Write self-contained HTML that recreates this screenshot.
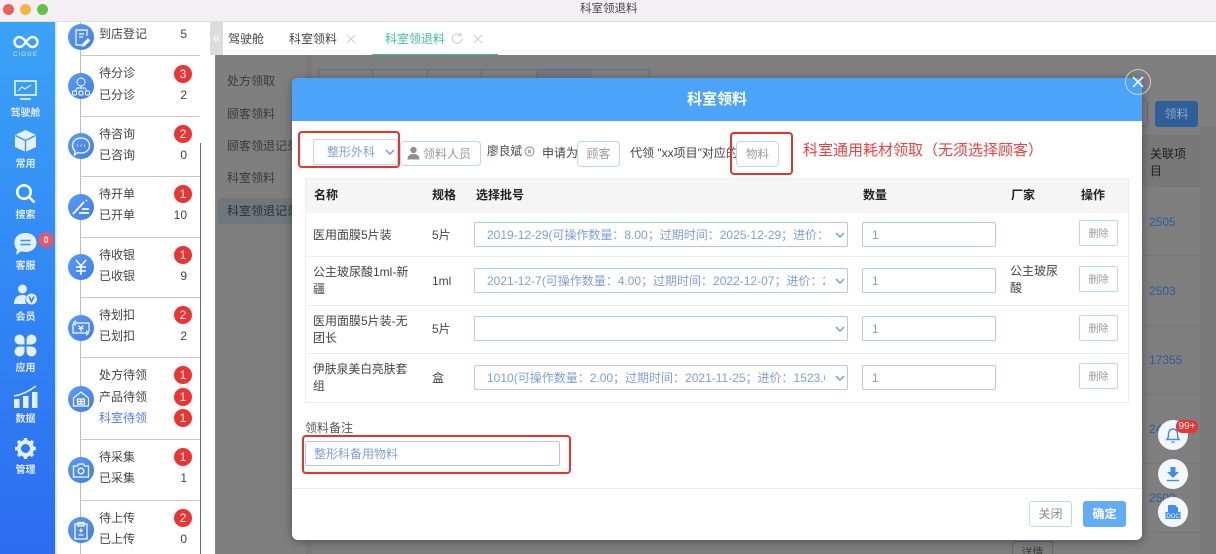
<!DOCTYPE html>
<html lang="zh"><head><meta charset="utf-8"><title>科室领退料</title>
<style>
*{box-sizing:border-box}
html,body{margin:0;padding:0;width:1216px;height:554px;overflow:hidden;background:#fff}
#root{position:relative;width:1216px;height:554px;overflow:hidden;background:#fff;font-family:"Liberation Sans","Noto Sans CJK SC",sans-serif;color:#444}
.a{position:absolute}
.t{position:absolute;white-space:nowrap;line-height:16px;font-size:12px}
.n{position:absolute;left:0;width:51px;text-align:center;color:#dfeafc;font-size:10px;line-height:12px;font-weight:bold}
.l{position:absolute;left:99px;font-size:12px;line-height:16px;color:#444;white-space:nowrap}
.c{position:absolute;width:20px;left:167px;text-align:right;font-size:12px;line-height:16px;color:#444}
.b{position:absolute;left:174px;width:18px;height:18px;border-radius:50%;background:#ee3333;color:#fff;text-align:center;font-size:12px;line-height:18px}
.d{position:absolute;left:80px;width:120px;height:1px;background:#c9c9c9}
.ic{position:absolute;left:68px;width:26px;height:26px;border-radius:50%;background:linear-gradient(135deg,#5b9bf6,#3f7de9)}
.in{position:absolute;border:1px solid #b4c9ec;border-radius:2px;background:#fff;color:#7f9fd9;font-size:12px;line-height:25px;padding-left:12px;white-space:nowrap;overflow:hidden}
.del{position:absolute;left:1079px;width:39px;height:26px;border:1px solid #bcd6f6;border-radius:2px;color:#999;font-size:10px;line-height:25px;padding-top:1px;text-align:center;background:#fff}
.chev{position:absolute;width:10px;height:6px}
.red{position:absolute;border:2px solid #e8322e;border-radius:4px}
.rl{position:absolute;left:305px;width:824px;height:1px;background:#ededf0}
.th{font-weight:bold;color:#222}
.num{position:absolute;left:1149px;color:#2e5c9a;font-size:12px;line-height:16px}
.fab{position:absolute;left:1158px;width:30px;height:30px;border-radius:50%;background:#f3f6fb}
.clip{display:block;width:338px;overflow:hidden}
</style></head><body><div id="root">

<!-- title bar -->
<div class="a" style="left:0;top:0;width:1216px;height:22px;background:#f4eff5;border-bottom:1px solid #e2dee4"></div>
<div class="a" style="left:3px;top:4px;width:11px;height:11px;border-radius:50%;background:#ef5f58"></div>
<div class="a" style="left:20px;top:4px;width:11px;height:11px;border-radius:50%;background:#f6b440"></div>
<div class="a" style="left:37px;top:4px;width:11px;height:11px;border-radius:50%;background:#60c443"></div>
<div class="t" style="left:580px;top:1px;color:#444;font-size:11.5px">科室领退料</div>

<!-- nav -->
<div class="a" style="left:0;top:22px;width:55px;height:532px;background:linear-gradient(180deg,#3ba3f7 0%,#3187f5 50%,#2c6cf0 100%)"></div>
<div class="a" style="left:55px;top:22px;width:3px;height:532px;background:linear-gradient(90deg,#cfe4fb,#fff)"></div>
<svg class="a" style="left:13px;top:35px" width="26" height="14" viewBox="0 0 26 14"><path d="M13 7C10 2.500 8 2 6.500 2a5 5 0 0 0 0 10c1.500 0 3.500-.5 6.500-5s5-5 6.500-5a5 5 0 0 1 0 10c-1.500 0-3.500-.5-6.500-5" fill="none" stroke="#fff" stroke-width="2.400"/></svg>
<div class="a" style="left:0;top:51px;width:51px;text-align:center;color:#d8e9fc;font-size:6px;line-height:8px;letter-spacing:1.200px">CIGUE</div>

<svg class="a" style="left:13px;top:79px" width="26" height="24" viewBox="0 0 26 24"><rect x="2" y="2" width="21" height="14" fill="none" stroke="#dcecfd" stroke-width="1.800"/><path d="M5 12l4-4 3 2 6-4" fill="none" stroke="#dcecfd" stroke-width="1.200"/><path d="M7 20h11" stroke="#dcecfd" stroke-width="1.800"/></svg>
<div class="n" style="top:108px">驾驶舱</div>
<svg class="a" style="left:13px;top:129px" width="25" height="24" viewBox="0 0 25 24"><path d="M12.500 1L23 6v12l-10.500 5L2 18V6z" fill="#e3f0fd"/><path d="M2.500 6.500l10 5 10-5M12.500 11.500V23" fill="none" stroke="#3a93f5" stroke-width="1.300"/></svg>
<div class="n" style="top:159px">常用</div>
<svg class="a" style="left:15px;top:183px" width="21" height="21" viewBox="0 0 21 21"><circle cx="9" cy="9" r="6.700" fill="none" stroke="#fff" stroke-width="2.600"/><path d="M14 14l5.500 5.500" stroke="#fff" stroke-width="2.600"/></svg>
<div class="n" style="top:210px">搜索</div>
<svg class="a" style="left:13px;top:232px" width="25" height="24" viewBox="0 0 25 24"><path d="M12.500 1c6.500 0 11 4 11 9.500S19 20 12.500 20c-1.500 0-3-.2-4.300-.7L3 23l1-5.500C2.200 15.800 1.500 13.300 1.500 10.500 1.500 5 6 1 12.500 1z" fill="#e3f0fd"/><path d="M7.500 8.500h10M7.500 12.500h10" stroke="#3a8ef5" stroke-width="1.500"/></svg>
<div class="n" style="top:261px">客服</div>
<div class="a" style="left:39px;top:233px;width:14px;height:14px;border-radius:50%;background:#ee5560;box-shadow:0 0 3px #ee5560;color:#fff;font-size:9px;line-height:14px;text-align:center;font-weight:bold">0</div>
<svg class="a" style="left:13px;top:283px" width="25" height="24" viewBox="0 0 25 24"><circle cx="9.500" cy="6" r="4.500" fill="#e3f0fd"/><path d="M1 21c0-6 3-9 8.500-9 2 0 3 .4 4 1-1.500 2-1.500 6 0 8z" fill="#e3f0fd"/><circle cx="18.500" cy="16" r="5.500" fill="#e3f0fd"/><path d="M16 13.500l2.500 5 2.500-5" fill="none" stroke="#2f7bf2" stroke-width="1.500"/></svg>
<div class="n" style="top:312px">会员</div>
<svg class="a" style="left:14px;top:334px" width="23" height="23" viewBox="0 0 23 23" fill="#e3f0fd"><path d="M5.500 0.500a5 5 0 0 1 5 5v5h-5a5 5 0 0 1 0-10zM17.500 0.500a5 5 0 0 1 0 10h-5v-5a5 5 0 0 1 5-5zM5.500 12.500h5v5a5 5 0 1 1-5-5zM12.500 12.500h5a5 5 0 1 1-5 5z"/></svg>
<div class="n" style="top:363px">应用</div>
<svg class="a" style="left:13px;top:385px" width="25" height="24" viewBox="0 0 25 24"><rect x="1" y="14" width="5.500" height="9" fill="#e3f0fd"/><rect x="10" y="11" width="5.500" height="12" fill="#e3f0fd"/><rect x="19" y="7" width="5.500" height="16" fill="#e3f0fd"/><path d="M1 11C8 10 15 7 23 1" fill="none" stroke="#e3f0fd" stroke-width="1.600"/></svg>
<div class="n" style="top:414px">数据</div>
<svg class="a" style="left:14px;top:437px" width="23" height="23" viewBox="0 0 23 23"><circle cx="11.500" cy="11.500" r="6.500" fill="none" stroke="#e3f0fd" stroke-width="4"/><path d="M11.500 1v4M11.500 18v4M1 11.500h4M18 11.500h4M4 4l3 3M16 16l3 3M19 4l-3 3M7 16l-3 3" stroke="#e3f0fd" stroke-width="3.400"/></svg>
<div class="n" style="top:465px">管理</div>

<!-- task panel -->
<div class="a" style="left:80px;top:22px;width:1px;height:532px;background:#bdbdbd"></div>
<div class="a" style="left:200px;top:143px;width:1px;height:411px;background:#6a6a6a"></div>
<div class="d" style="top:55px"></div><div class="d" style="top:116px"></div><div class="d" style="top:176px"></div><div class="d" style="top:237px"></div><div class="d" style="top:297px"></div><div class="d" style="top:357px"></div><div class="d" style="top:439px"></div><div class="d" style="top:500px"></div>

<div class="ic" style="top:24px"><svg width="26" height="26" viewBox="0 0 26 26" fill="none" stroke="#fff" stroke-width="1.200"><path d="M19 12V6H8v15h6M11 10h5M11 13h4"/><path d="M15 20l5-5 1.500 1.500-5 5-2 .5z" fill="#fff"/></svg></div>
<div class="ic" style="top:73px"><svg width="26" height="26" viewBox="0 0 26 26" fill="none" stroke="#fff" stroke-width="1"><circle cx="13" cy="9" r="4"/><path d="M13 13v3M7 18l2-3h8l2 3"/><rect x="4.500" y="18" width="4" height="4" rx="1"/><rect x="11" y="18" width="4" height="4" rx="1"/><rect x="17.500" y="18" width="4" height="4" rx="1"/></svg></div>
<div class="ic" style="top:133px"><svg width="26" height="26" viewBox="0 0 26 26" fill="none" stroke="#fff" stroke-width="1.300"><path d="M13 5c5 0 8.500 3 8.500 7.500S18 20 13 20c-1 0-2-.1-3-.5L6.500 22l.5-4c-1.500-1.500-2.500-3.300-2.500-5.500C4.500 8 8 5 13 5z"/><path d="M9 12.500h1M12.500 12.500h1M16 12.500h1" stroke-width="1.800"/></svg></div>
<div class="ic" style="top:194px"><svg width="26" height="26" viewBox="0 0 26 26" fill="none" stroke="#fff" stroke-width="1.800"><path d="M5 20L16 8M18 7l1-1M14 15h7M11 19h10"/></svg></div>
<div class="ic" style="top:254px"><svg width="26" height="26" viewBox="0 0 26 26" fill="none" stroke="#fff" stroke-width="1.500"><path d="M8 6l5 6 5-6M8 13h10M8 17h10M13 12v9"/></svg></div>
<div class="ic" style="top:315px"><svg width="26" height="26" viewBox="0 0 26 26" fill="none" stroke="#fff" stroke-width="1.200"><path d="M7 8h14v9M19 18H5V9M8 5.500L5.500 8 8 10.500M18 15.500L20.500 18 18 20.500"/><path d="M10.500 10.500L13 13l2.500-2.500M10.500 13.500h5M13 13v3.500"/></svg></div>
<div class="ic" style="top:386px"><svg width="26" height="26" viewBox="0 0 26 26" fill="none" stroke="#fff" stroke-width="1.200"><path d="M5.500 12L13 6l7.500 6v8h-15z"/><path d="M9.500 13h7v5h-7zM9.500 15.500h7M13 13v5"/></svg></div>
<div class="ic" style="top:457px"><svg width="26" height="26" viewBox="0 0 26 26" fill="none" stroke="#fff" stroke-width="1.300"><path d="M5.500 9h4l1-2h5l1 2h4v11h-15z"/><circle cx="13" cy="14" r="2.800"/></svg></div>
<div class="ic" style="top:517px"><svg width="26" height="26" viewBox="0 0 26 26" fill="none" stroke="#fff" stroke-width="1.300"><path d="M7 7h12v15H7zM10 5.500h6V9h-6zM13 11.500v4M11 13.500h4M10.500 18h5"/></svg></div>

<div class="l" style="top:26px">到店登记</div><div class="c" style="top:26px">5</div>
<div class="l" style="top:65px">待分诊</div><div class="b" style="top:65px">3</div>
<div class="l" style="top:87px">已分诊</div><div class="c" style="top:87px">2</div>
<div class="l" style="top:126px">待咨询</div><div class="b" style="top:125px">2</div>
<div class="l" style="top:147px">已咨询</div><div class="c" style="top:147px">0</div>
<div class="l" style="top:186px">待开单</div><div class="b" style="top:185px">1</div>
<div class="l" style="top:207px">已开单</div><div class="c" style="top:207px">10</div>
<div class="l" style="top:247px">待收银</div><div class="b" style="top:246px">1</div>
<div class="l" style="top:268px">已收银</div><div class="c" style="top:268px">9</div>
<div class="l" style="top:307px">待划扣</div><div class="b" style="top:306px">2</div>
<div class="l" style="top:328px">已划扣</div><div class="c" style="top:328px">2</div>
<div class="l" style="top:367px">处方待领</div><div class="b" style="top:366px">1</div>
<div class="l" style="top:389px">产品待领</div><div class="b" style="top:388px">1</div>
<div class="l" style="top:410px;color:#4f7ff0">科室待领</div><div class="b" style="top:409px">1</div>
<div class="l" style="top:449px">待采集</div><div class="b" style="top:448px">1</div>
<div class="l" style="top:470px">已采集</div><div class="c" style="top:470px">1</div>
<div class="l" style="top:510px">待上传</div><div class="b" style="top:509px">2</div>
<div class="l" style="top:531px">已上传</div><div class="c" style="top:531px">0</div>

<!-- tabs -->
<div class="a" style="left:210px;top:22px;width:13px;height:33px;background:#dcdcdc;color:#fff;font-size:14px;line-height:30px;text-align:center">«</div>
<div class="t" style="left:228px;top:31px;font-size:12px;color:#444">驾驶舱</div>
<div class="t" style="left:289px;top:31px;font-size:12px;color:#444">科室领料</div>
<svg class="a" style="left:346px;top:34px" width="10" height="10" viewBox="0 0 10 10"><path d="M1 1l8 8M9 1L1 9" stroke="#ccc" stroke-width="1"/></svg>
<div class="t" style="left:385px;top:31px;font-size:12px;color:#3fc0a6">科室领退料</div>
<svg class="a" style="left:451px;top:32px" width="13" height="13" viewBox="0 0 13 13"><path d="M11 6.500A4.800 4.800 0 1 1 9.500 3" fill="none" stroke="#ccc" stroke-width="1.100"/><path d="M10 .8v3H7" fill="none" stroke="#ccc" stroke-width="1"/></svg>
<svg class="a" style="left:473px;top:34px" width="10" height="10" viewBox="0 0 10 10"><path d="M1 1l8 8M9 1L1 9" stroke="#ccc" stroke-width="1"/></svg>
<div class="a" style="left:372px;top:54px;width:126px;height:1px;background:#3fc0a6"></div>

<!-- dim background -->
<div class="a" style="left:215px;top:55px;width:1001px;height:499px;background:#7f7f7f"></div>
<div class="a" style="left:215px;top:55px;width:1px;height:499px;background:#8a8a8a"></div>
<div class="a" style="left:306px;top:55px;width:6px;height:499px;background:#7a7a7a"></div>
<div class="a" style="left:218px;top:198px;width:80px;height:26px;background:#6f777c;border-radius:3px"></div>
<div class="t" style="left:227px;top:73px;color:#3a3a3a">处方领取</div>
<div class="t" style="left:227px;top:106px;color:#3a3a3a">顾客领料</div>
<div class="t" style="left:227px;top:138px;color:#3a3a3a">顾客领退记录</div>
<div class="t" style="left:227px;top:170px;color:#3a3a3a">科室领料</div>
<div class="t" style="left:227px;top:203px;color:#2f2f2f">科室领退记录</div>
<div class="a" style="left:318px;top:69px;width:332px;height:20px;border:1px solid #5f6f88"></div>
<div class="a" style="left:372px;top:69px;width:1px;height:20px;background:#5f6f88"></div>
<div class="a" style="left:427px;top:69px;width:1px;height:20px;background:#5f6f88"></div>
<div class="a" style="left:481px;top:69px;width:1px;height:20px;background:#5f6f88"></div>
<div class="a" style="left:536px;top:69px;width:55px;height:20px;background:#75787f;border:1px solid #5f6f88"></div>
<div class="a" style="left:1142px;top:100px;width:6px;height:27px;border:1px solid #6a6a6a;border-left:0;border-radius:0 3px 3px 0"></div>
<div class="a" style="left:1155px;top:101px;width:43px;height:26px;background:#2f5f98;border-radius:3px;color:#8fa8c6;font-size:12px;line-height:26px;text-align:center">领料</div>
<div class="a" style="left:1142px;top:135px;width:58px;height:52px;background:#787878"></div>
<div class="t" style="left:1150px;top:146px;width:40px;white-space:normal;line-height:17px;color:#1f1f1f">关联项目</div>
<div class="a" style="left:1142px;top:255px;width:58px;height:1px;background:#777"></div>
<div class="a" style="left:1142px;top:325px;width:58px;height:1px;background:#777"></div>
<div class="a" style="left:1142px;top:394px;width:58px;height:1px;background:#777"></div>
<div class="a" style="left:1142px;top:463px;width:58px;height:1px;background:#777"></div>
<div class="a" style="left:1142px;top:532px;width:58px;height:1px;background:#777"></div>
<div class="a" style="left:1200px;top:127px;width:16px;height:427px;background:#797979"></div>
<div class="num" style="top:214px">2505</div>
<div class="num" style="top:283px">2503</div>
<div class="num" style="top:352px">17355</div>
<div class="num" style="top:421px">2402</div>
<div class="num" style="top:490px">2502</div>
<div class="a" style="left:1012px;top:541px;width:41px;height:13px;border:1px solid #5d6b80;border-bottom:0;border-radius:2px 2px 0 0;color:#3a3a3a;font-size:11px;text-align:center;line-height:22px;overflow:hidden">详情</div>

<!-- modal -->
<div class="a" style="left:292px;top:78px;width:850px;height:462px;background:#fff;border-radius:6px;box-shadow:0 2px 10px rgba(0,0,0,.35)"></div>
<div class="a" style="left:292px;top:78px;width:850px;height:43px;background:#4ba4f9;border-radius:6px 6px 0 0;color:#fff;font-weight:bold;font-size:15px;line-height:43px;text-align:center">科室领料</div>
<div class="a" style="left:1125px;top:69px;width:26px;height:26px;border:1px solid #ddd;border-radius:50%;opacity:.85"></div>
<svg class="a" style="left:1131px;top:75px" width="14" height="14" viewBox="0 0 14 14"><path d="M2 2l10 10M12 2L2 12" stroke="#e8eff9" stroke-width="1.800"/></svg>

<!-- modal toolbar -->
<div class="in" style="left:313px;top:139px;width:85px;height:26px;padding-left:13px;font-size:12px;border-color:#c5d6f2;line-height:25px">整形外科</div>
<svg class="chev" style="left:385px;top:149px" viewBox="0 0 10 6"><path d="M1 1l4 4 4-4" fill="none" stroke="#7a9cd8" stroke-width="1.500"/></svg>
<div class="a" style="left:400px;top:141px;width:81px;height:25px;border:1px solid #bcd6f6;border-radius:4px;background:#fff;color:#999;font-size:12px;line-height:24px;padding-left:22px">领料人员</div>
<svg class="a" style="left:407px;top:146px" width="13" height="14" viewBox="0 0 13 14"><circle cx="6.500" cy="4" r="3.200" fill="#8f8f8f"/><path d="M.5 13.500c0-4 2.500-5.500 6-5.500s6 1.500 6 5.500z" fill="#8f8f8f"/></svg>
<div class="t" style="left:487px;top:144px;font-size:11.700px;color:#444">廖良斌</div>
<svg class="a" style="left:524px;top:146px" width="11" height="11" viewBox="0 0 11 11"><circle cx="5.500" cy="5.500" r="4.500" fill="none" stroke="#888"/><path d="M3.800 3.800l3.400 3.400M7.200 3.800L3.800 7.200" stroke="#888"/></svg>
<div class="t" style="left:542px;top:145px;font-size:12px;color:#444">申请为</div>
<div class="a" style="left:577px;top:141px;width:43px;height:26px;border:1px solid #bcd6f6;border-radius:4px;color:#999;font-size:12px;text-align:center;line-height:25px;background:#fff">顾客</div>
<div class="t" style="left:630px;top:145px;font-size:12px;color:#444">代领 "xx项目"对应的</div>
<div class="a" style="left:736px;top:141px;width:43px;height:26px;border:1px solid #bcd6f6;border-radius:4px;color:#999;font-size:11.500px;text-align:center;line-height:26px;background:#fff">物料</div>
<div class="t" style="left:803px;top:142px;font-size:15px;line-height:18px;color:#f04040">科室通用耗材领取（无须选择顾客）</div>

<!-- table -->
<div class="a" style="left:305px;top:178px;width:824px;height:225px;border:1px solid #ededf0"></div>
<div class="a" style="left:306px;top:179px;width:822px;height:34px;background:#f5f5f5"></div>
<div class="t th" style="left:314px;top:187px">名称</div>
<div class="t th" style="left:432px;top:187px">规格</div>
<div class="t th" style="left:476px;top:187px">选择批号</div>
<div class="t th" style="left:863px;top:187px">数量</div>
<div class="t th" style="left:1011px;top:187px">厂家</div>
<div class="t th" style="left:1081px;top:187px">操作</div>
<div class="rl" style="top:256px"></div><div class="rl" style="top:305px"></div><div class="rl" style="top:353px"></div>

<div class="t" style="left:313px;top:227px">医用面膜5片装</div>
<div class="t" style="left:432px;top:227px">5片</div>
<div class="in" style="left:474px;top:222px;width:374px;height:25px"><span class="clip">2019-12-29(可操作数量：8.00；过期时间：2025-12-29；进价：</span></div>
<svg class="chev" style="left:835px;top:232px" viewBox="0 0 10 6"><path d="M1 1l4 4 4-4" fill="none" stroke="#7a9cd8" stroke-width="1.500"/></svg>
<div class="in" style="left:862px;top:222px;width:134px;height:25px;padding-left:9px">1</div>
<div class="del" style="top:220px">删除</div>

<div class="t" style="left:313px;top:264px;line-height:17px">公主玻尿酸1ml-新<br>疆</div>
<div class="t" style="left:432px;top:273px">1ml</div>
<div class="in" style="left:474px;top:268px;width:374px;height:25px"><span class="clip">2021-12-7(可操作数量：4.00；过期时间：2022-12-07；进价：2505</span></div>
<svg class="chev" style="left:835px;top:278px" viewBox="0 0 10 6"><path d="M1 1l4 4 4-4" fill="none" stroke="#7a9cd8" stroke-width="1.500"/></svg>
<div class="in" style="left:862px;top:268px;width:134px;height:25px;padding-left:9px">1</div>
<div class="t" style="left:1010px;top:263px;line-height:17px">公主玻尿<br>酸</div>
<div class="del" style="top:266px">删除</div>

<div class="t" style="left:313px;top:313px;line-height:17px">医用面膜5片装-无<br>团长</div>
<div class="t" style="left:432px;top:321px">5片</div>
<div class="in" style="left:474px;top:316px;width:374px;height:25px"></div>
<svg class="chev" style="left:835px;top:326px" viewBox="0 0 10 6"><path d="M1 1l4 4 4-4" fill="none" stroke="#7a9cd8" stroke-width="1.500"/></svg>
<div class="in" style="left:862px;top:316px;width:134px;height:25px;padding-left:9px">1</div>
<div class="del" style="top:315px">删除</div>

<div class="t" style="left:313px;top:361px;line-height:17px;font-size:11.800px">伊肤泉美白亮肤套<br>组</div>
<div class="t" style="left:432px;top:370px">盒</div>
<div class="in" style="left:474px;top:365px;width:374px;height:25px"><span class="clip">1010(可操作数量：2.00；过期时间：2021-11-25；进价：1523.00</span></div>
<svg class="chev" style="left:835px;top:375px" viewBox="0 0 10 6"><path d="M1 1l4 4 4-4" fill="none" stroke="#7a9cd8" stroke-width="1.500"/></svg>
<div class="in" style="left:862px;top:365px;width:134px;height:25px;padding-left:9px">1</div>
<div class="del" style="top:363px">删除</div>

<!-- notes -->
<div class="t" style="left:305px;top:420px;font-size:12px;color:#555">领料备注</div>
<div class="in" style="left:305px;top:441px;width:255px;height:25px;padding-left:8px">整形科备用物料</div>

<!-- red boxes -->
<div class="red" style="left:298px;top:131px;width:102px;height:37px"></div>
<div class="red" style="left:730px;top:132px;width:63px;height:43px"></div>
<div class="red" style="left:302px;top:435px;width:269px;height:39px"></div>

<!-- footer -->
<div class="a" style="left:292px;top:488px;width:850px;height:1px;background:#ececec"></div>
<div class="a" style="left:1029px;top:501px;width:43px;height:26px;border:1px solid #bcd6f6;border-radius:3px;color:#888;font-size:12px;line-height:24px;text-align:center;background:#fff">关闭</div>
<div class="a" style="left:1083px;top:501px;width:43px;height:26px;border-radius:3px;background:#62adf8;color:#fff;font-size:12px;line-height:26px;text-align:center;font-weight:bold">确定</div>

<!-- floating buttons -->
<div class="fab" style="top:420px"></div>
<svg class="a" style="left:1165px;top:427px" width="16" height="17" viewBox="0 0 16 17"><path d="M2 12.500c1.500-1.500 1.500-3 1.500-5.500S5 2 8 2s4.500 2.500 4.500 5 0 4 1.500 5.500z" fill="none" stroke="#3f8cf5" stroke-width="1.400"/><path d="M6.500 15h3" stroke="#3f8cf5" stroke-width="1.400"/></svg>
<div class="a" style="left:1176px;top:420px;width:22px;height:13px;border-radius:6px;background:#ee3333;color:#fff;font-size:10px;line-height:13px;text-align:center">99+</div>
<div class="fab" style="top:459px"></div>
<svg class="a" style="left:1166px;top:466px" width="14" height="16" viewBox="0 0 14 16"><path d="M4.500 1h5v5H13l-6 6-6-6h3.500z" fill="#3f8cf5"/><path d="M1 14.500h12" stroke="#3f8cf5" stroke-width="1.400"/></svg>
<div class="fab" style="top:497px"></div>
<svg class="a" style="left:1165px;top:504px" width="16" height="16" viewBox="0 0 16 16"><path d="M3 1h7l3 3v5H3z" fill="#3f8cf5"/><rect x="0.500" y="8" width="15" height="7" fill="#3f8cf5"/><text x="8" y="14" font-size="6" fill="#fff" text-anchor="middle" font-family="Liberation Sans">DOC</text></svg>

</div></body></html>
